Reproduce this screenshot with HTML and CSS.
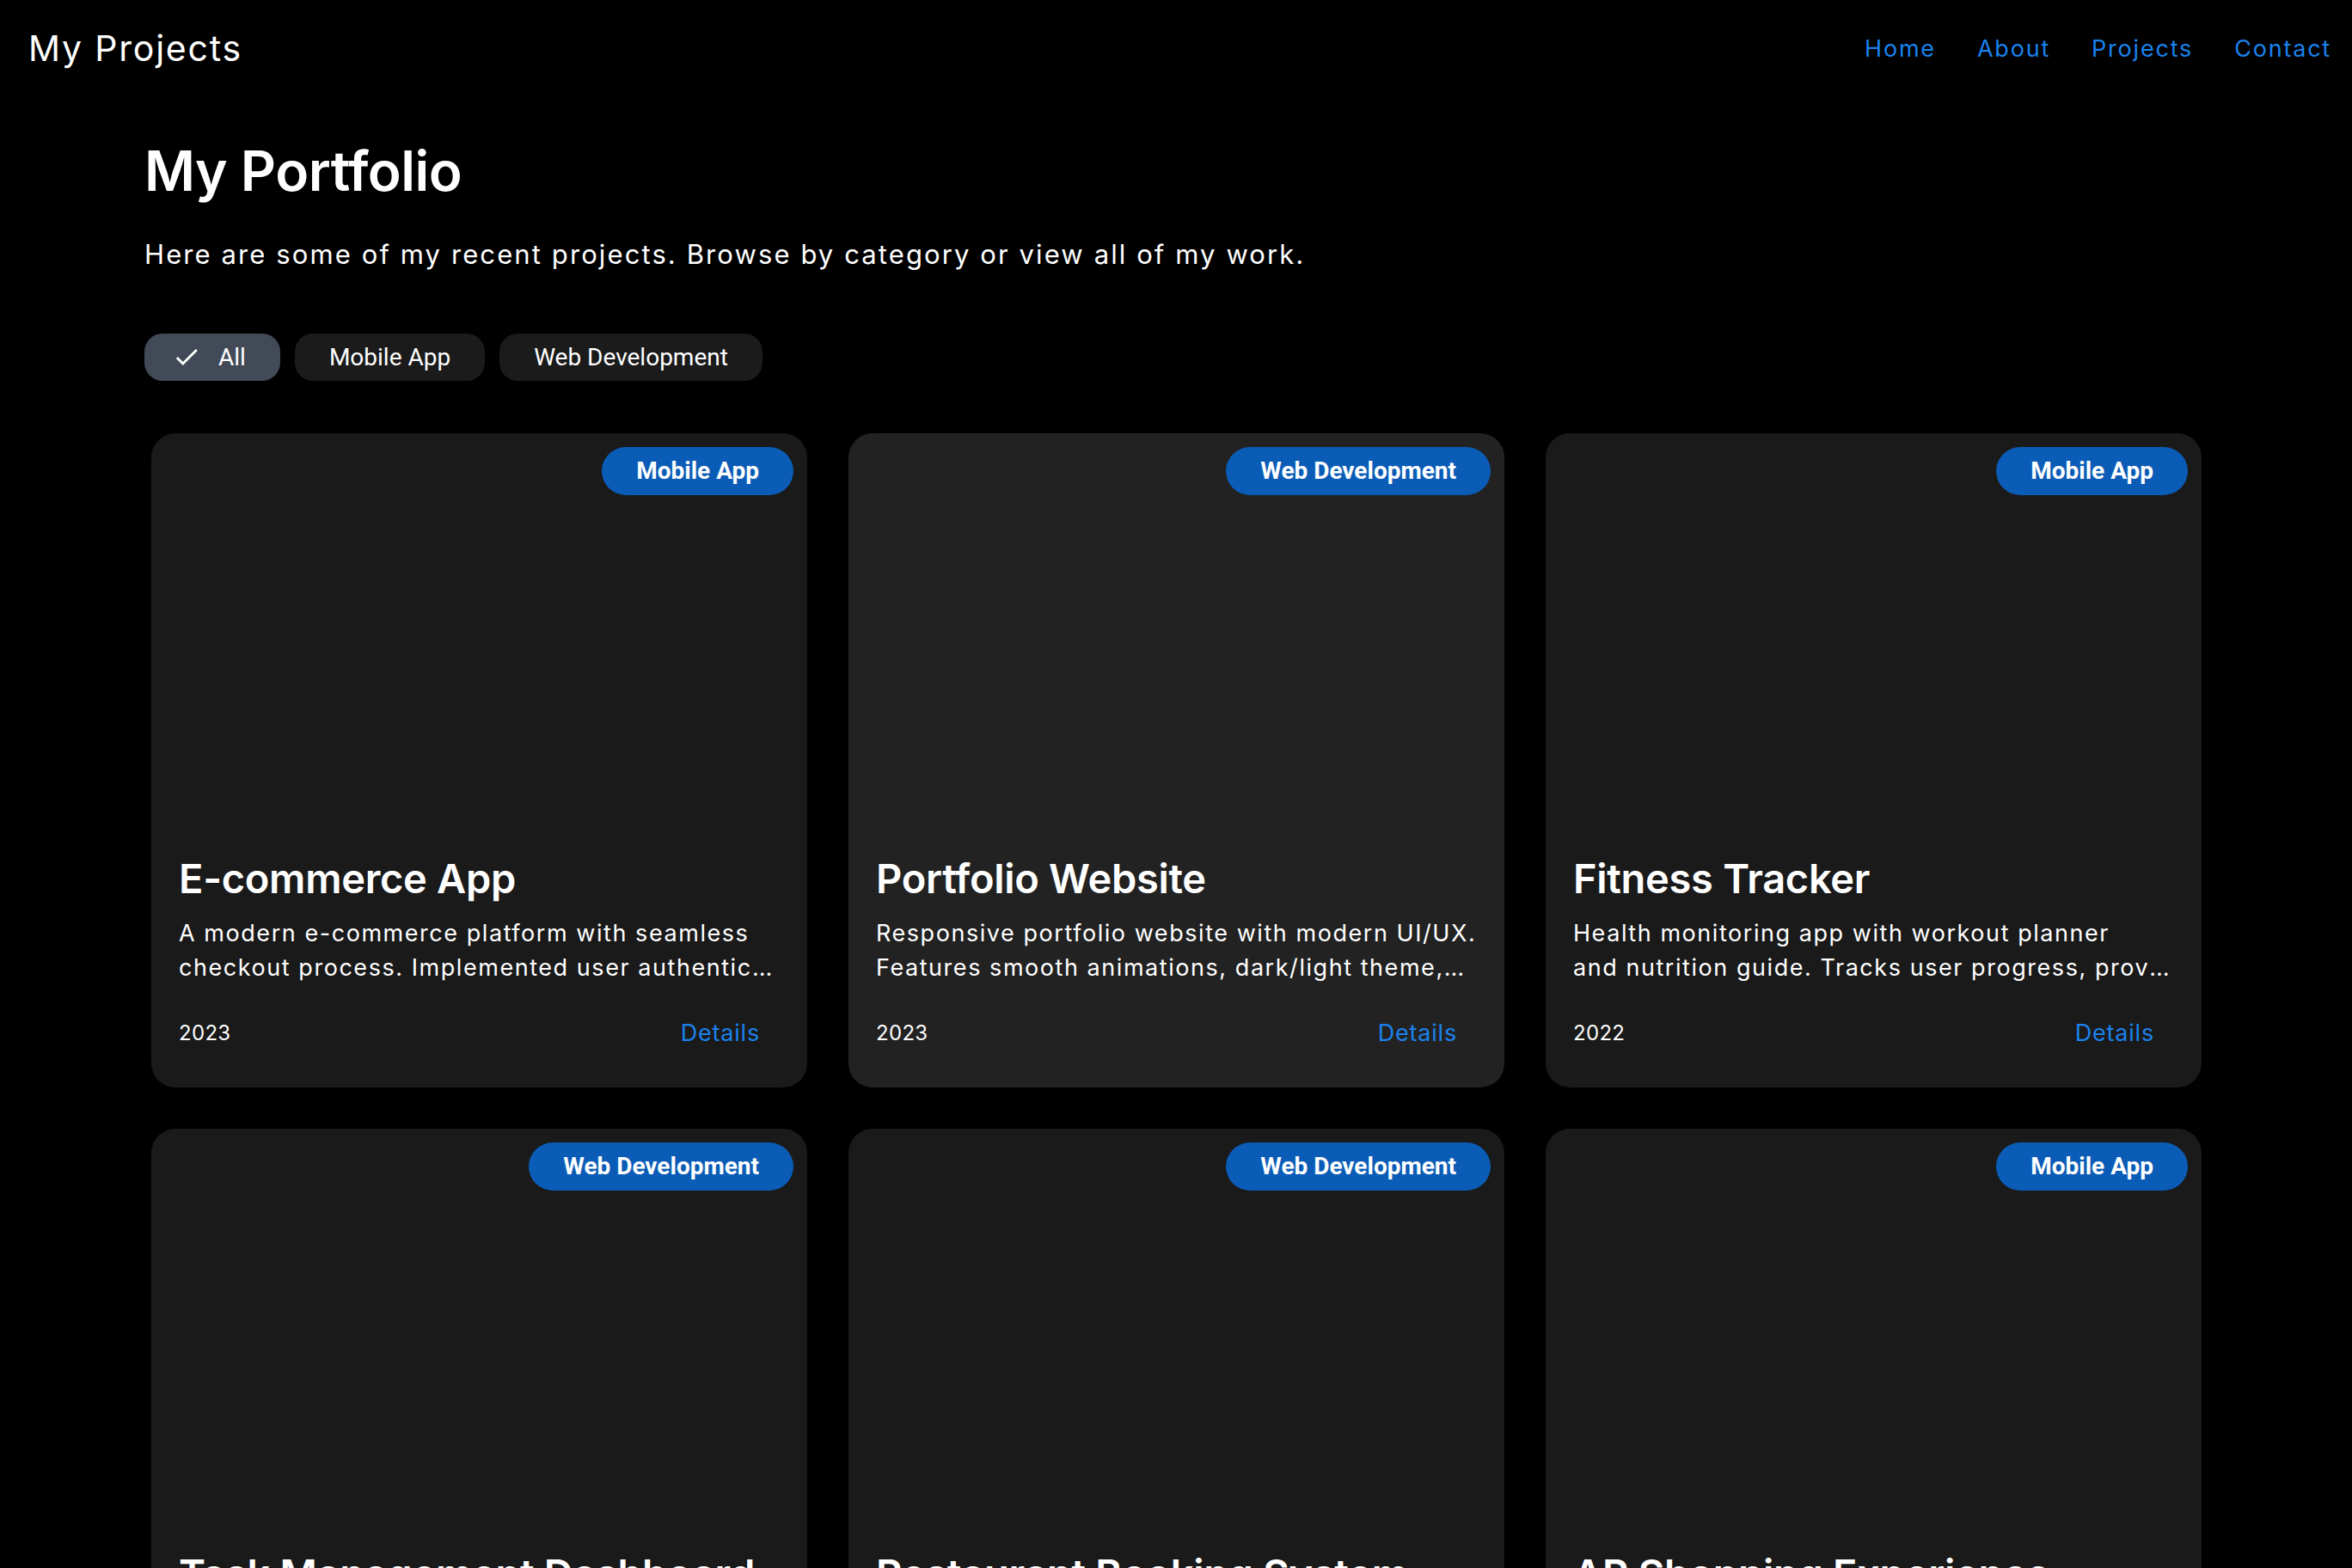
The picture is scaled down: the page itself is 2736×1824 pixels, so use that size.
FILE: index.html
```html
<!DOCTYPE html>
<html lang="en">
<head>
  <meta charset="UTF-8">
  <meta name="viewport" content="width=device-width, initial-scale=1.0">
  <title>My Projects</title>
  <link rel="stylesheet" href="styles.css">
</head>
<body>
  <header class="app-bar">
    <div class="brand">My Projects</div>
    <nav class="nav">
      <a href="#">Home</a>
      <a href="#">About</a>
      <a href="#">Projects</a>
      <a href="#">Contact</a>
    </nav>
  </header>

  <main class="content">
    <h1 class="page-title">My Portfolio</h1>
    <p class="page-intro">Here are some of my recent projects. Browse by category or view all of my work.</p>

    <div class="filters">
      <button class="chip chip-selected">
        <svg class="chip-check" viewBox="0 0 24 24"><path d="M9 16.17L4.83 12l-1.42 1.41L9 19 21 7l-1.41-1.41z"/></svg>
        All
      </button>
      <button class="chip">Mobile App</button>
      <button class="chip">Web Development</button>
    </div>

    <div class="grid">
      <article class="card">
        <span class="badge">Mobile App</span>
        <h2 class="card-title">E-commerce App</h2>
        <p class="card-desc">
          <span class="desc-line">A modern e-commerce platform with seamless</span>
          <span class="desc-line desc-cut">checkout process. Implemented user authentication and secure payments.</span>
        </p>
        <div class="card-footer">
          <span class="year">2023</span>
          <a class="details" href="#">Details</a>
        </div>
      </article>

      <article class="card card-hover">
        <span class="badge">Web Development</span>
        <h2 class="card-title">Portfolio Website</h2>
        <p class="card-desc">
          <span class="desc-line">Responsive portfolio website with modern UI/UX.</span>
          <span class="desc-line desc-cut">Features smooth animations, dark/light theme,and contact form.</span>
        </p>
        <div class="card-footer">
          <span class="year">2023</span>
          <a class="details" href="#">Details</a>
        </div>
      </article>

      <article class="card">
        <span class="badge">Mobile App</span>
        <h2 class="card-title">Fitness Tracker</h2>
        <p class="card-desc">
          <span class="desc-line">Health monitoring app with workout planner</span>
          <span class="desc-line desc-cut">and nutrition guide. Tracks user progress, provides insights.</span>
        </p>
        <div class="card-footer">
          <span class="year">2022</span>
          <a class="details" href="#">Details</a>
        </div>
      </article>

      <article class="card">
        <span class="badge">Web Development</span>
        <h2 class="card-title">Task Management Dashboard</h2>
        <p class="card-desc">
          <span class="desc-line">Team productivity dashboard with kanban</span>
          <span class="desc-line desc-cut">boards, deadlines and real-time collaboration.</span>
        </p>
        <div class="card-footer">
          <span class="year">2022</span>
          <a class="details" href="#">Details</a>
        </div>
      </article>

      <article class="card">
        <span class="badge">Web Development</span>
        <h2 class="card-title">Restaurant Booking System</h2>
        <p class="card-desc">
          <span class="desc-line">Online table reservation system with menu</span>
          <span class="desc-line desc-cut">browsing, booking calendar and email confirmations.</span>
        </p>
        <div class="card-footer">
          <span class="year">2022</span>
          <a class="details" href="#">Details</a>
        </div>
      </article>

      <article class="card">
        <span class="badge">Mobile App</span>
        <h2 class="card-title">AR Shopping Experience</h2>
        <p class="card-desc">
          <span class="desc-line">Augmented reality shopping app to preview</span>
          <span class="desc-line desc-cut">furniture in your own room before buying.</span>
        </p>
        <div class="card-footer">
          <span class="year">2021</span>
          <a class="details" href="#">Details</a>
        </div>
      </article>
    </div>
  </main>
</body>
</html>
```

FILE: styles.css
```css
body {
  margin: 0;
  background: #000;
  color: #fff;
  font-family: Inter, "Noto Sans", sans-serif;
}

.app-bar {
  height: 112px;
  display: flex;
  align-items: center;
  justify-content: space-between;
  padding: 0 24px 0 33px;
}

.brand {
  font-size: 41px;
  font-weight: 400;
  letter-spacing: 1.8px;
}

.nav {
  display: flex;
  gap: 48px;
}

.nav a {
  color: #1a82ec;
  text-decoration: none;
  font-size: 27px;
  letter-spacing: 1.8px;
}

.content {
  padding: 0 168px;
}

.page-title {
  margin: 49px 0 0;
  font-size: 64px;
  font-weight: 600;
  line-height: 1.2;
  letter-spacing: -0.5px;
}

.page-intro {
  margin: 37px 0 0;
  font-size: 31px;
  line-height: 42px;
  letter-spacing: 2.1px;
}

.filters {
  display: flex;
  gap: 17px;
  margin-top: 71px;
}

.chip {
  display: flex;
  align-items: center;
  height: 55px;
  padding: 0 40px;
  border: none;
  border-radius: 21px;
  background: #1b1b1b;
  color: #fff;
  font-family: Roboto, sans-serif;
  font-size: 28px;
}

.chip-selected {
  padding-left: 32px;
  background: #434a57;
  gap: 20px;
}

.chip-check {
  width: 34px;
  height: 34px;
  fill: #fff;
}

.grid {
  display: grid;
  grid-template-columns: repeat(3, 763px);
  column-gap: 48px;
  row-gap: 48px;
  margin-top: 61px;
  padding-left: 8px;
}

.card {
  position: relative;
  height: 761px;
  box-sizing: border-box;
  display: flex;
  flex-direction: column;
  justify-content: flex-end;
  padding: 0 32px 28px;
  background: #1a1a1a;
  border-radius: 28px;
}

.card-hover {
  background: #222;
}

.badge {
  position: absolute;
  top: 16px;
  right: 16px;
  height: 56px;
  padding: 0 40px;
  display: flex;
  align-items: center;
  border-radius: 28px;
  background: #0a5cb6;
  color: #fff;
  font-family: Roboto, sans-serif;
  font-weight: 700;
  font-size: 28px;
}

.card-title {
  margin: 0 0 15px;
  font-size: 47px;
  font-weight: 600;
  line-height: 1.2;
  letter-spacing: -0.3px;
  white-space: nowrap;
}

.card-desc {
  margin: 0 0 21px;
  font-size: 27px;
  line-height: 40px;
  letter-spacing: 1.55px;
}

.desc-line {
  display: block;
  white-space: nowrap;
}

.desc-cut {
  overflow: hidden;
  text-overflow: ellipsis;
}

.card-footer {
  height: 70px;
  display: flex;
  align-items: center;
  justify-content: space-between;
}

.year {
  font-size: 24px;
  letter-spacing: 0.3px;
}

.details {
  padding: 0 23px 0 28px;
  color: #1a82ec;
  text-decoration: none;
  font-size: 27px;
  letter-spacing: 0.8px;
}
```
